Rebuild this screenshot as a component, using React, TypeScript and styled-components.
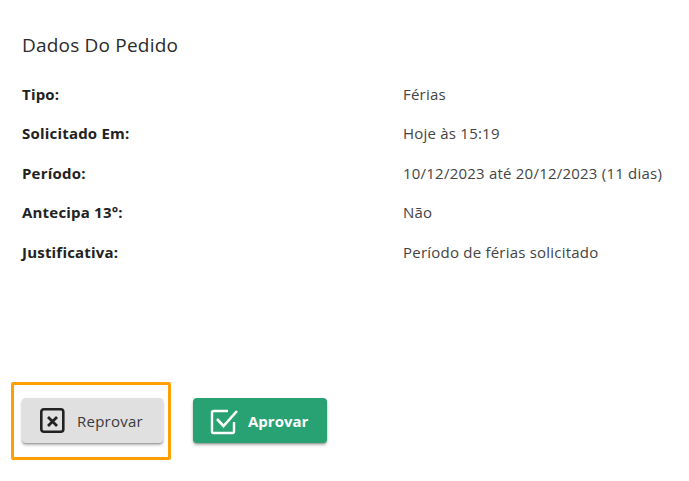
import React from 'react'
import styled, { createGlobalStyle } from 'styled-components'

const GlobalStyle = createGlobalStyle`
  html, body {
    margin: 0;
    padding: 0;
    background: #fff;
    font-family: "Open Sans", "Noto Sans", sans-serif;
  }
`;

const Page = styled.div`
  width: 689px;
  height: 481px;
  box-sizing: border-box;
  padding: 32px 0 0 22px;
  overflow: hidden;
`;

const Title = styled.h2`
  margin: 0 0 25.5px;
  font-size: 19px;
  font-weight: 400;
  line-height: 26px;
  letter-spacing: 0.2px;
  color: #2b2b2b;
`;

const Rows = styled.div`
  display: flex;
  flex-direction: column;
  gap: 19.5px;
`;

const Row = styled.div`
  display: grid;
  grid-template-columns: 381px 1fr;
  font-size: 15px;
  line-height: 20px;
`;

const Label = styled.span`
  font-weight: 700;
  color: #222;
  letter-spacing: 0.2px;
`;

const Value = styled.span`
  color: #444;
  white-space: nowrap;
  letter-spacing: 0.22px;
`;

const Actions = styled.div`
  display: flex;
  align-items: flex-start;
  gap: 22px;
  margin: 120.5px 0 0 -11px;
`;

const Highlight = styled.div`
  box-sizing: border-box;
  width: 160px;
  height: 78px;
  border: 3px solid #ffa000;
  border-radius: 2px;
  padding: 13px 0 0 8px;
`;

const Button = styled.button<{ $primary?: boolean }>`
  display: flex;
  align-items: center;
  height: 45px;
  width: ${p => (p.$primary ? '134px' : '141px')};
  margin-top: ${p => (p.$primary ? '16px' : '0')};
  box-sizing: border-box;
  padding: 0 0 0 17px;
  gap: ${p => (p.$primary ? '10px' : '11px')};
  border: none;
  border-radius: 4px;
  font-family: inherit;
  font-size: 15px;
  letter-spacing: ${p => (p.$primary ? '0' : '0.25px')};
  font-weight: ${p => (p.$primary ? 700 : 400)};
  background: ${p => (p.$primary ? '#28a173' : '#e0e0e0')};
  color: ${p => (p.$primary ? '#fff' : '#3a3a3a')};
  box-shadow: 0 2px 3px rgba(0, 0, 0, 0.3), 0 1px 1px rgba(0, 0, 0, 0.14);
`;

const RejectIcon = () => (
  <svg width="27" height="27" viewBox="0 0 27 27" fill="none">
    <rect x="2.3" y="2.3" width="22" height="22.4" rx="2.5" stroke="#222" strokeWidth="2.6" />
    <path d="M9 10l9 9M18 10l-9 9" stroke="#222" strokeWidth="2.8" />
  </svg>
)

const ApproveIcon = () => (
  <svg width="28" height="28" viewBox="0 0 28 28" fill="none">
    <path d="M18 4H3.5a1.5 1.5 0 0 0-1.5 1.5v19A1.5 1.5 0 0 0 3.5 26h19a1.5 1.5 0 0 0 1.5-1.5V15" stroke="#fff" strokeWidth="2.4" />
    <path d="M7 12l6.5 7L27 4" stroke="#fff" strokeWidth="2.6" />
  </svg>
)

const rows = [
  ['Tipo:', 'Férias'],
  ['Solicitado Em:', 'Hoje às 15:19'],
  ['Período:', '10/12/2023 até 20/12/2023 (11 dias)'],
  ['Antecipa 13°:', 'Não'],
  ['Justificativa:', 'Período de férias solicitado'],
]

export default function App() {
  return (
    <Page>
      <GlobalStyle />
      <Title>Dados Do Pedido</Title>
      <Rows>
        {rows.map(([label, value]) => (
          <Row key={label}>
            <Label>{label}</Label>
            <Value>{value}</Value>
          </Row>
        ))}
      </Rows>
      <Actions>
        <Highlight>
          <Button><RejectIcon />Reprovar</Button>
        </Highlight>
        <Button $primary><ApproveIcon />Aprovar</Button>
      </Actions>
    </Page>
  )
}
